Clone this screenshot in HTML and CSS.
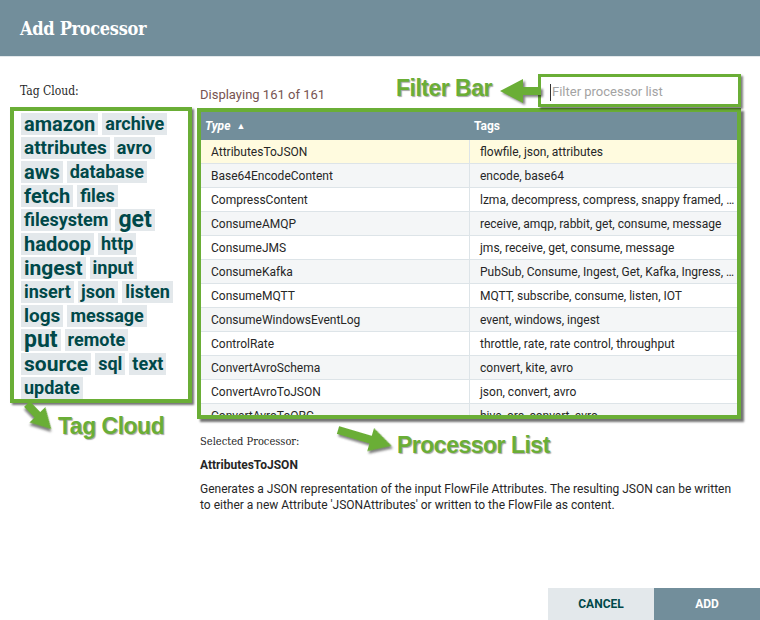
FILE: index.html
```html
<!DOCTYPE html>
<html lang="en">
<head>
<meta charset="utf-8">
<title>Add Processor</title>
<link rel="stylesheet" href="styles.css">
</head>
<body>
<div class="dialog">
  <header class="dialog-header">
    <h1 class="dialog-title">Add Processor</h1>
  </header>

  <main class="dialog-body">
    <section class="tag-panel">
      <div class="panel-label">Tag Cloud:</div>
      <div class="tag-cloud hl">
        <span class="tag s20">amazon</span>
        <span class="tag s18">archive</span>
        <span class="tag s19">attributes</span>
        <span class="tag s18">avro</span>
        <span class="tag s20">aws</span>
        <span class="tag s18">database</span>
        <span class="tag s20">fetch</span>
        <span class="tag s18">files</span>
        <span class="tag s18">filesystem</span>
        <span class="tag s23">get</span>
        <span class="tag s20">hadoop</span>
        <span class="tag s18">http</span>
        <span class="tag s21">ingest</span>
        <span class="tag s18">input</span>
        <span class="tag s18">insert</span>
        <span class="tag s18">json</span>
        <span class="tag s18">listen</span>
        <span class="tag s19">logs</span>
        <span class="tag s18">message</span>
        <span class="tag s23">put</span>
        <span class="tag s18">remote</span>
        <span class="tag s21">source</span>
        <span class="tag s18">sql</span>
        <span class="tag s18">text</span>
        <span class="tag s18">update</span>
      </div>
    </section>

    <section class="list-panel">
      <div class="list-top">
        <div class="count">Displaying 161 of 161</div>
        <div class="filter hl">
          <input type="text" placeholder="Filter processor list">
          <span class="caret"></span>
        </div>
      </div>

      <div class="grid hl">
        <div class="grid-head">
          <div class="hcell sorted">Type <span class="sort">&#9650;</span></div>
          <div class="hcell">Tags</div>
        </div>
        <div class="grid-row selected-row"><div class="cell">AttributesToJSON</div><div class="cell">flowfile, json, attributes</div></div>
        <div class="grid-row alt"><div class="cell">Base64EncodeContent</div><div class="cell">encode, base64</div></div>
        <div class="grid-row"><div class="cell">CompressContent</div><div class="cell">lzma, decompress, compress, snappy framed, snappy, bzip2, gzip</div></div>
        <div class="grid-row alt"><div class="cell">ConsumeAMQP</div><div class="cell">receive, amqp, rabbit, get, consume, message</div></div>
        <div class="grid-row"><div class="cell">ConsumeJMS</div><div class="cell">jms, receive, get, consume, message</div></div>
        <div class="grid-row alt"><div class="cell">ConsumeKafka</div><div class="cell">PubSub, Consume, Ingest, Get, Kafka, Ingress, Topic</div></div>
        <div class="grid-row"><div class="cell">ConsumeMQTT</div><div class="cell">MQTT, subscribe, consume, listen, IOT</div></div>
        <div class="grid-row alt"><div class="cell">ConsumeWindowsEventLog</div><div class="cell">event, windows, ingest</div></div>
        <div class="grid-row"><div class="cell">ControlRate</div><div class="cell">throttle, rate, rate control, throughput</div></div>
        <div class="grid-row alt"><div class="cell">ConvertAvroSchema</div><div class="cell">convert, kite, avro</div></div>
        <div class="grid-row"><div class="cell">ConvertAvroToJSON</div><div class="cell">json, convert, avro</div></div>
        <div class="grid-row alt"><div class="cell">ConvertAvroToORC</div><div class="cell">hive, orc, convert, avro</div></div>
      </div>

      <div class="selected">
        <div class="sel-label">Selected Processor:</div>
        <div class="sel-name">AttributesToJSON</div>
        <p class="sel-desc">Generates a JSON representation of the input FlowFile Attributes. The resulting JSON can be written to either a new Attribute 'JSONAttributes' or written to the FlowFile as content.</p>
      </div>
    </section>
  </main>

  <footer class="dialog-footer">
    <button class="btn btn-cancel" type="button">CANCEL</button>
    <button class="btn btn-add" type="button">ADD</button>
  </footer>

  <svg class="arrows" width="760" height="620" viewBox="0 0 760 620" aria-hidden="true">
    <polygon class="arrow" points="500,91 523,79 523,87 541,87 541,95 523,95 523,103"/>
    <polygon class="arrow" transform="translate(338 430) rotate(16.5)" points="0,-4 34,-4 34,-12 56,0 34,12 34,4 0,4"/>
    <polygon class="arrow" transform="translate(27 404) rotate(46)" points="0,-4 15,-4 15,-11 35,0 15,11 15,4 0,4"/>
  </svg>
  <span class="annot annot-filter">Filter Bar</span>
  <span class="annot annot-tags">Tag Cloud</span>
  <span class="annot annot-list">Processor List</span>
</div>
</body>
</html>
```

FILE: styles.css
```css
* { box-sizing: border-box; }

body {
  margin: 0;
  width: 760px;
  height: 620px;
  overflow: hidden;
  background: #fff;
  color: #262626;
  font-family: Roboto, "Liberation Sans", sans-serif;
}

.dialog {
  position: relative;
  width: 760px;
  height: 620px;
  display: flex;
  flex-direction: column;
}

/* header */
.dialog-header {
  height: 57px;
  flex: none;
  background: #728e9b;
  border-bottom: 1px solid #e3e8eb;
  padding-left: 20px;
  display: flex;
  align-items: center;
}
.dialog-title {
  margin: 0;
  font-family: "DejaVu Serif", serif;
  font-stretch: condensed;
  font-weight: bold;
  font-size: 18px;
  letter-spacing: -0.3px;
  color: #fff;
}

/* body */
.dialog-body {
  display: flex;
  gap: 5px;
  padding-left: 10px;
}

.hl {
  border-style: solid;
  border-color: #6aae36;
}

.tag-panel {
  width: 182px;
  padding-top: 26px;
}
.panel-label {
  font-family: "DejaVu Serif", serif;
  font-stretch: condensed;
  font-size: 12px;
  line-height: 16px;
  padding-left: 10px;
  margin-bottom: 8px;
}
.tag-cloud {
  height: 296px;
  border-width: 4px;
  box-shadow: 2px 2px 2px rgba(0, 0, 0, 0.55);
  padding: 2px 2px 0 7px;
  display: flex;
  flex-wrap: wrap;
  align-content: flex-start;
  align-items: flex-start;
  gap: 2px 4px;
  background: #fff;
}
.tag {
  height: 22px;
  line-height: 22px;
  padding: 0 3px;
  background: #e3e8eb;
  color: #004849;
  font-weight: bold;
  white-space: nowrap;
}
.s18 { font-size: 18px; }
.s19 { font-size: 19px; }
.s20 { font-size: 20px; }
.s21 { font-size: 21px; }
.s23 { font-size: 23px; }

.list-panel {
  width: 544px;
  padding-top: 17px;
}
.list-top {
  height: 34px;
  display: flex;
  justify-content: space-between;
  align-items: flex-end;
}
.count {
  padding-left: 3px;
  margin-bottom: 5px;
  font-size: 13px;
  line-height: 16px;
  color: #775351;
}
.filter {
  position: relative;
  width: 203px;
  height: 33px;
  margin-bottom: 1px;
  border-width: 3px;
  box-shadow: 2px 2px 2px rgba(0, 0, 0, 0.5);
  background: #fff;
}
.filter input {
  width: 100%;
  height: 100%;
  border: 0;
  outline: none;
  background: transparent;
  padding: 2px 0 0 11px;
  font-family: Roboto, sans-serif;
  font-size: 13px;
  color: #262626;
}
.filter input::placeholder { color: #a3a3a3; }
.caret {
  position: absolute;
  left: 9px;
  top: 7px;
  width: 1px;
  height: 17px;
  background: #333;
}

/* grid */
.grid {
  height: 311px;
  border-width: 4px;
  overflow: hidden;
  box-shadow: 3px 3px 2px rgba(0, 0, 0, 0.55);
  background: #fff;
}
.grid-head {
  height: 28px;
  display: grid;
  grid-template-columns: 269px 267px;
  background: #728e9b;
  color: #fff;
  font-weight: bold;
  font-size: 12px;
  line-height: 28px;
}
.hcell { padding: 0 4px; white-space: nowrap; }
.hcell.sorted { font-style: italic; }
.sort { font-size: 9px; font-style: normal; margin-left: 3px; vertical-align: 1px; }

.grid-row {
  height: 24px;
  display: grid;
  grid-template-columns: 269px 267px;
  border-bottom: 1px solid #dde4e8;
  font-size: 12px;
  line-height: 24px;
  background: #fff;
}
.grid-row.alt { background: #f4f6f7; }
.grid-row.selected-row { background: #fffbdf; }
.cell {
  padding: 0 2px 0 10px;
  overflow: hidden;
  white-space: nowrap;
  text-overflow: ellipsis;
}
.cell:first-child { border-right: 1px solid #dde4e8; }

/* selected processor */
.selected { padding-left: 3px; }
.sel-label {
  margin-top: 16px;
  font-family: "DejaVu Serif", serif;
  font-stretch: condensed;
  font-size: 11px;
  line-height: 14px;
}
.sel-name {
  margin-top: 8px;
  font-weight: bold;
  font-size: 12px;
  line-height: 16px;
}
.sel-desc {
  margin: 8px 0 0;
  font-size: 12px;
  line-height: 16px;
}

/* footer */
.dialog-footer {
  margin-top: auto;
  display: flex;
  justify-content: flex-end;
}
.btn {
  width: 106px;
  height: 32px;
  border: 0;
  font-family: Roboto, sans-serif;
  font-weight: bold;
  font-size: 12px;
}
.btn-cancel { background: #e3e8eb; color: #004849; }
.btn-add { background: #728e9b; color: #fff; }

/* annotation overlay */
.arrows {
  position: absolute;
  left: 0;
  top: 0;
  pointer-events: none;
}
.arrow {
  fill: #6aae36;
  filter: drop-shadow(2px 2px 1px rgba(0, 0, 0, 0.5));
}
.annot {
  position: absolute;
  font-family: "Liberation Sans", Arial, sans-serif;
  font-weight: bold;
  font-size: 23px;
  line-height: 23px;
  letter-spacing: -0.5px;
  color: #6aae36;
  text-shadow: 1px 1px 1px rgba(0, 0, 0, 0.35);
  white-space: nowrap;
}
.annot-filter { left: 396px; top: 77px; }
.annot-tags { left: 58px; top: 415px; }
.annot-list { left: 397px; top: 434px; }
```
